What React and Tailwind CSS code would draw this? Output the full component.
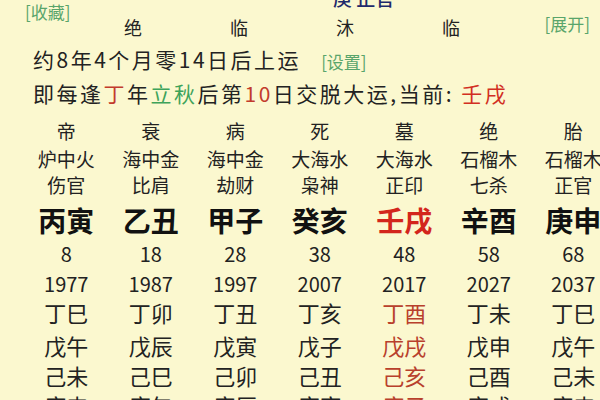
import React from 'react';

const cols = [
  { ds: '帝', ny: '炉中火', ss: '伤官', gz: '丙寅', age: 8, year: 1977, ln: ['丁巳', '戊午', '己未', '庚申'] },
  { ds: '衰', ny: '海中金', ss: '比肩', gz: '乙丑', age: 18, year: 1987, ln: ['丁卯', '戊辰', '己巳', '庚午'] },
  { ds: '病', ny: '海中金', ss: '劫财', gz: '甲子', age: 28, year: 1997, ln: ['丁丑', '戊寅', '己卯', '庚辰'] },
  { ds: '死', ny: '大海水', ss: '枭神', gz: '癸亥', age: 38, year: 2007, ln: ['丁亥', '戊子', '己丑', '庚寅'] },
  { ds: '墓', ny: '大海水', ss: '正印', gz: '壬戌', age: 48, year: 2017, ln: ['丁酉', '戊戌', '己亥', '庚子'], cur: true },
  { ds: '绝', ny: '石榴木', ss: '七杀', gz: '辛酉', age: 58, year: 2027, ln: ['丁未', '戊申', '己酉', '庚戌'] },
  { ds: '胎', ny: '石榴木', ss: '正官', gz: '庚申', age: 68, year: 2037, ln: ['丁巳', '戊午', '己未', '庚申'] },
];

const Row = ({ h, children }) => (
  <div className={`grid grid-cols-[repeat(7,84.5px)] pl-[24px] shrink-0 ${h} items-center`}>{children}</div>
);

const Cell = ({ className, children }) => (
  <div className={`text-center whitespace-nowrap ${className}`}>{children}</div>
);

export default function App() {
  return (
    <div
      className="w-[600px] h-[400px] overflow-hidden bg-[#fbf8cf] text-[#222] flex flex-col"
      style={{ fontFamily: '"Noto Sans CJK SC", "Noto Sans", sans-serif' }}
    >
      <div className="shrink-0 -mt-[12px] pl-[333px] leading-[20px] text-[19px] text-[#1f2a6b] font-medium whitespace-nowrap">
        庚 正官
      </div>
      <div className="shrink-0 -mt-[6px] pl-[25px] leading-[20px] text-[17px] text-[#59a56b]">[收藏]</div>
      <div className="shrink-0 -mt-[5px] flex items-center h-[20px] text-[18px]">
        <div className="grid grid-cols-[repeat(4,106px)] pl-[80px]">
          <span className="text-center">绝</span>
          <span className="text-center">临</span>
          <span className="text-center">沐</span>
          <span className="text-center">临</span>
        </div>
        <span className="ml-auto mr-[10px] -mt-[6px] text-[17px] text-[#59a56b]">[展开]</span>
      </div>
      <div className="shrink-0 h-[46px] flex items-center pl-[33px] text-[21px] tracking-[2.5px] whitespace-nowrap">
        约8年4个月零14日后上运
        <span className="ml-[20px] mt-[4px] text-[17px] tracking-normal text-[#59a56b]">[设置]</span>
      </div>
      <div className="shrink-0 h-[22px] flex items-center pl-[33px] text-[21px] tracking-[2.5px] whitespace-nowrap">
        即每逢<span className="text-[#c23b2c]">丁</span>年<span className="text-[#3ea35a]">立秋</span>后第
        <span className="text-[#c23b2c]">10</span>日交脱大运,当前:&nbsp;<span className="text-[#d22f22]">壬戌</span>
      </div>
      <div className="shrink-0 h-[12px]" />
      <Row h="h-[28px]">
        {cols.map((c, i) => <Cell key={i} className="text-[19px]">{c.ds}</Cell>)}
      </Row>
      <Row h="h-[26px]">
        {cols.map((c, i) => <Cell key={i} className="text-[19px]">{c.ny}</Cell>)}
      </Row>
      <Row h="h-[28px]">
        {cols.map((c, i) => <Cell key={i} className="text-[19px]">{c.ss}</Cell>)}
      </Row>
      <Row h="h-[40px]">
        {cols.map((c, i) => (
          <Cell key={i} className={`text-[28px] font-bold ${c.cur ? 'text-[#d3261c]' : 'text-[#111]'}`}>{c.gz}</Cell>
        ))}
      </Row>
      <Row h="h-[30px]">
        {cols.map((c, i) => <Cell key={i} className="text-[20px]">{c.age}</Cell>)}
      </Row>
      <Row h="h-[26px]">
        {cols.map((c, i) => <Cell key={i} className="text-[20px]">{c.year}</Cell>)}
      </Row>
      {[0, 1, 2, 3].map((r) => (
        <Row key={r} h={r === 0 ? 'h-[34px]' : r === 3 ? 'h-[32px]' : 'h-[30px]'}>
          {cols.map((c, i) => (
            <Cell key={i} className={`text-[22px] ${c.cur ? 'text-[#b8402c]' : ''}`}>{c.ln[r]}</Cell>
          ))}
        </Row>
      ))}
    </div>
  );
}
